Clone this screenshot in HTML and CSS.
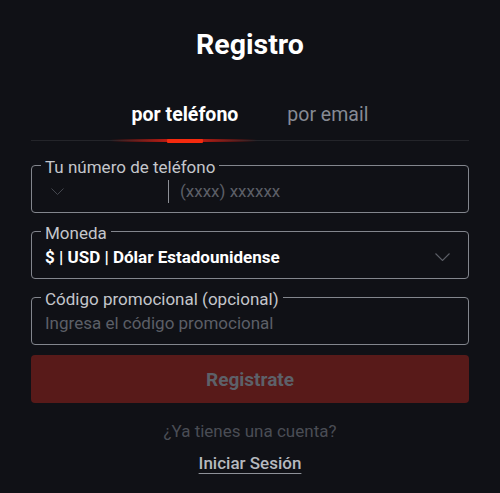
FILE: index.html
```html
<!DOCTYPE html>
<html>
    <head>
        <meta charset="utf-8">
        <title>Registro</title>
        <link rel="stylesheet" href="styles.css">
    </head>
    <body>
        <div class="page">
            <h1 class="title">Registro</h1>

            <div class="tabs">
                <div class="tab tab_active">por teléfono</div>
                <div class="tab">por email</div>
            </div>
            <div class="tab_line"><span class="tab_glow"></span><span class="tab_mark"></span></div>

            <form class="form">
                <div class="field">
                    <div class="field_label">Tu número de teléfono</div>
                    <div class="field_row">
                        <div class="code_select">
                            <svg class="chev chev_dim" width="13" height="7" viewBox="0 0 13 7"><path d="M0.5 0.5l6 6 6-6" fill="none" stroke="currentColor" stroke-width="1"/></svg>
                        </div>
                        <span class="phone_sep"></span>
                        <span class="placeholder">(xxxx) xxxxxx</span>
                    </div>
                </div>

                <div class="field">
                    <div class="field_label">Moneda</div>
                    <div class="field_row select_row">
                        <span class="value">$ | USD | Dólar Estadounidense</span>
                        <svg class="chev" width="15" height="8" viewBox="0 0 15 8"><path d="M0.5 0.5l7 7 7-7" fill="none" stroke="currentColor" stroke-width="1.1"/></svg>
                    </div>
                </div>

                <div class="field field_last">
                    <div class="field_label">Código promocional (opcional)</div>
                    <div class="field_row">
                        <span class="placeholder">Ingresa el código promocional</span>
                    </div>
                </div>

                <button type="button" class="submit">Registrate</button>
            </form>

            <p class="question">¿Ya tienes una cuenta?</p>
            <p class="login"><a class="login_link">Iniciar Sesión</a></p>
        </div>
    </body>
</html>
```

FILE: styles.css
```css
body {
	margin: 0;
	background: #101116;
	font-family: Roboto, "Liberation Sans", sans-serif;
	color: #c4c6cb;
}
.page {
	padding: 28px 31px 0 31px;
}
.title {
	margin: 0;
	font-size: 28.5px;
	line-height: 34px;
	font-weight: 700;
	color: #ffffff;
	text-align: center;
}
.tabs {
	display: flex;
	justify-content: center;
	gap: 49px;
	margin-top: 41px;
}
.tab {
	font-size: 19.5px;
	line-height: 24px;
	color: #868a94;
}
.tab_active {
	font-weight: 700;
	color: #ffffff;
}
.tab_line {
	position: relative;
	height: 1px;
	margin-top: 13px;
	background: #24252a;
}
.tab_glow { /* soft red fade under the active tab */
	position: absolute;
	left: 79px;
	top: -1px;
	width: 147px;
	height: 3px;
	background: linear-gradient(90deg, rgba(200, 28, 18, 0), rgba(200, 28, 18, 0.95) 40%, rgba(200, 28, 18, 0.95) 60%, rgba(200, 28, 18, 0));
}
.tab_mark {
	position: absolute;
	left: 136px;
	top: -1px;
	width: 36px;
	height: 4px;
	border-radius: 1px;
	background: #f52a0e;
}
.form {
	margin-top: 24px;
}
.field {
	height: 48px;
	box-sizing: border-box;
	margin-bottom: 18px;
	padding: 0 13px;
	border: 1px solid #83868d;
	border-radius: 4px;
}
.field_last {
	margin-bottom: 10px;
}
.field_label {
	width: fit-content;
	margin: -8px 0 0 -4px;
	padding: 0 4px;
	background: #101116;
	font-size: 17px;
	line-height: 18px;
	color: #c4c6cb;
}
.field_row {
	display: flex;
	align-items: center;
	height: 30px;
}
.code_select {
	width: 123px;
	padding-left: 6px;
	box-sizing: border-box;
	display: flex;
	align-items: center;
}
.chev {
	display: block;
	color: #5c5f67;
}
.chev_dim {
	color: #44474e;
}
.phone_sep {
	width: 1px;
	height: 23px;
	background: #8d9096;
	margin-right: 11px;
}
.placeholder {
	font-size: 17px;
	color: #5c5f67;
}
.select_row {
	justify-content: space-between;
	padding-right: 5px;
}
.value {
	font-size: 17px;
	font-weight: 700;
	color: #ffffff;
}
.submit {
	display: block;
	width: 100%;
	height: 48px;
	border: 0;
	border-radius: 4px;
	background: #581a19;
	font-family: Roboto, "Liberation Sans", sans-serif;
	font-size: 19px;
	font-weight: 700;
	color: #5d6169;
}
.question {
	margin: 18px 0 0 0;
	text-align: center;
	font-size: 17px;
	line-height: 20px;
	color: #4a4d55;
}
.login {
	margin: 11px 0 0 0;
	text-align: center;
	font-size: 17px;
	line-height: 22px;
}
.login_link {
	color: #b6b9bf;
	font-weight: 500;
	text-decoration: underline;
	text-decoration-color: #8e9198;
	text-decoration-thickness: 2px;
	text-underline-offset: 4px;
}
```
